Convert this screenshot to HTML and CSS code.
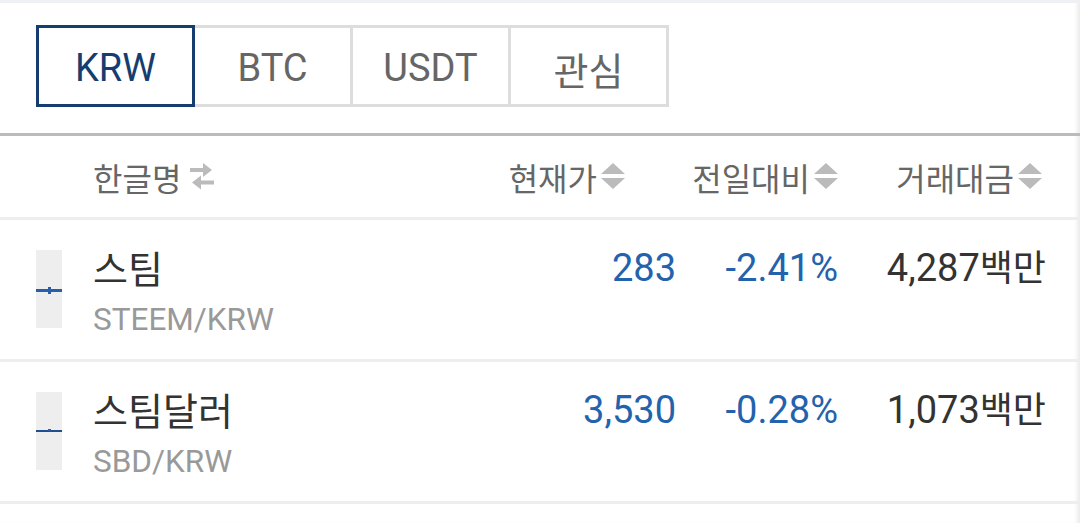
FILE: index.html
```html
<!DOCTYPE html>
<html lang="ko">
<head>
<meta charset="utf-8">
<title>KRW 마켓</title>
<link rel="stylesheet" href="styles.css">
</head>
<body>
<div class="page">
  <div class="topbar"></div>
  <div class="tabs-wrap">
    <div class="tabs">
      <div class="tab active">KRW</div>
      <div class="tab">BTC</div>
      <div class="tab">USDT</div>
      <div class="tab">관심</div>
    </div>
  </div>
  <div class="head">
    <div class="h-name">한글명
      <svg class="swap" width="24" height="27" viewBox="0 0 24 27"><path d="M0 5h13V0l9 7-9 7V9H0z M24 17.5H11v-5l-9 7 9 7v-5h13z" fill="#bbb"/></svg>
    </div>
    <div class="h-col h-price">현재가<svg class="sort" width="24" height="30" viewBox="0 0 24 30"><path d="M12 1L24 12H0z M0 16H24L12 27z" fill="#bbb"/></svg></div>
    <div class="h-col h-change">전일대비<svg class="sort" width="24" height="30" viewBox="0 0 24 30"><path d="M12 1L24 12H0z M0 16H24L12 27z" fill="#bbb"/></svg></div>
    <div class="h-col h-vol">거래대금<svg class="sort" width="24" height="30" viewBox="0 0 24 30"><path d="M12 1L24 12H0z M0 16H24L12 27z" fill="#bbb"/></svg></div>
  </div>
  <div class="row">
    <svg class="thumb" width="26" height="78" viewBox="0 0 26 78"><rect width="26" height="78" fill="#eeeeee"/><rect x="0" y="39" width="26" height="3" fill="#2a5ea8"/><rect x="12" y="37" width="3" height="7" fill="#2a5ea8"/></svg>
    <div class="name">
      <div class="kr">스팀</div>
      <div class="pair">STEEM/KRW</div>
    </div>
    <div class="num price">283</div>
    <div class="num change">-2.41%</div>
    <div class="num vol">4,287<span class="unit">백만</span></div>
  </div>
  <div class="row">
    <svg class="thumb" width="26" height="78" viewBox="0 0 26 78"><rect width="26" height="78" fill="#eeeeee"/><rect x="0" y="38" width="26" height="2" fill="#1f4f8e"/><rect x="12" y="37" width="3" height="2" fill="#2a5ea8"/></svg>
    <div class="name">
      <div class="kr">스팀달러</div>
      <div class="pair">SBD/KRW</div>
    </div>
    <div class="num price">3,530</div>
    <div class="num change">-0.28%</div>
    <div class="num vol">1,073<span class="unit">백만</span></div>
  </div>
</div>
</body>
</html>
```

FILE: styles.css
```css
html, body {
  margin: 0;
  padding: 0;
  background: #ffffff;
}
body {
  font-family: Roboto, "Noto Sans CJK KR", sans-serif;
}
.page {
  width: 1080px;
  height: 523px;
  overflow: hidden;
  box-shadow: inset -5px 0 5px -3px #e6e6e6;
}
.topbar {
  height: 3px;
  background: #eef0f3;
}
.tabs-wrap {
  height: 133px;
  border-bottom: 3px solid #bbbbbb;
  box-sizing: border-box;
  padding: 22px 0 0 36px;
}
.tabs {
  display: flex;
}
.tab {
  width: 161px;
  height: 82px;
  box-sizing: border-box;
  border: 3px solid #dddddd;
  margin-left: -3px;
  padding-top: 4px;
  display: flex;
  align-items: center;
  justify-content: center;
  font-size: 38px;
  color: #666666;
  position: relative;
}
.tab:first-child {
  margin-left: 0;
  width: 159px;
}
.tab.active {
  border-color: #153d6f;
  color: #153d6f;
  z-index: 1;
}
.head {
  height: 84px;
  box-sizing: border-box;
  border-bottom: 3px solid #eeeeee;
  display: flex;
  align-items: center;
  padding: 0 38px 0 93px;
  font-size: 32px;
  color: #666666;
}
.h-name {
  flex: 1;
  display: flex;
  align-items: center;
  gap: 9px;
}
.h-col {
  display: flex;
  align-items: center;
  justify-content: flex-end;
  gap: 4px;
}
.h-change { width: 213px; }
.h-vol { width: 204px; }
.row {
  height: 142px;
  box-sizing: border-box;
  border-bottom: 3px solid #eeeeee;
  display: flex;
  align-items: flex-start;
  padding: 30px 34px 0 36px;
}
.thumb {
  flex: none;
  display: block;
}
.name {
  flex: 1;
  margin-left: 31px;
}
.kr {
  font-size: 38px;
  line-height: 40px;
  color: #333333;
}
.pair {
  font-size: 31.5px;
  line-height: 40px;
  margin-top: 10px;
  color: #999999;
}
.num {
  font-size: 38px;
  line-height: 40px;
  margin-top: -2px;
  text-align: right;
  color: #2362ac;
}
.change { width: 162px; }
.vol {
  width: 208px;
  color: #333333;
}
.unit {
  font-size: 36px;
}
```
